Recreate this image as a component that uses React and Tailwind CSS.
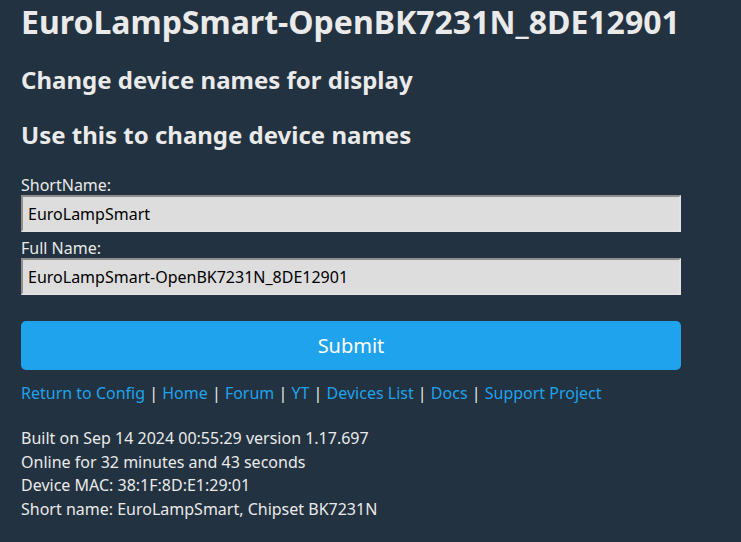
import React, { useState } from 'react';

const links = ['Return to Config', 'Home', 'Forum', 'YT', 'Devices List', 'Docs', 'Support Project'];

export default function App() {
  const [shortName, setShortName] = useState('EuroLampSmart');
  const [fullName, setFullName] = useState('EuroLampSmart-OpenBK7231N_8DE12901');

  return (
    <div className="min-h-screen bg-[#223240] text-[#eaeaea] font-['Noto_Sans',sans-serif] px-[21px]">
      <div className="w-[660px] [font-stretch:condensed]">
        <h1 className="text-[32px] font-bold leading-[40px] pt-[2px]">EuroLampSmart-OpenBK7231N_8DE12901</h1>
        <h2 className="text-[24px] font-bold leading-[30px] mt-[23px]">Change device names for display</h2>
        <h2 className="text-[24px] font-bold leading-[30px] mt-[25px]">Use this to change device names</h2>

        <form className="mt-[25px]" onSubmit={e => e.preventDefault()}>
          <label className="block text-[16px] leading-[20px]">ShortName:</label>
          <input
            className="block w-full h-[37px] bg-[#dddddd] text-black text-[16px] px-[5px] border-2 border-t-[#8f8f8f] border-l-[#8f8f8f] border-r-[#e2e2e2] border-b-[#e2e2e2] outline-none"
            value={shortName}
            onChange={e => setShortName(e.target.value)}
          />
          <label className="block text-[16px] leading-[20px] mt-[6px]">Full Name:</label>
          <input
            className="block w-full h-[37px] bg-[#dddddd] text-black text-[16px] px-[5px] border-2 border-t-[#8f8f8f] border-l-[#8f8f8f] border-r-[#e2e2e2] border-b-[#e2e2e2] outline-none"
            value={fullName}
            onChange={e => setFullName(e.target.value)}
          />
          <button type="submit" className="block w-full h-[49px] mt-[26px] bg-[#1fa3ec] rounded-[5px] text-white text-[20px]">
            Submit
          </button>
        </form>

        <div className="mt-[12px] text-[16px] leading-[22px]">
          {links.map((l, i) => (
            <span key={l}>
              <a href="#" className="text-[#1fa3ec]">{l}</a>
              {i < links.length - 1 && <span className="text-[#eaeaea]"> | </span>}
            </span>
          ))}
        </div>
      </div>

      <div className="mt-[23px] text-[16px] leading-[23.5px]">
        <div>Built on Sep 14 2024 00:55:29 version 1.17.697</div>
        <div>Online for 32 minutes and 43 seconds</div>
        <div>Device MAC: 38:1F:8D:E1:29:01</div>
        <div>Short name: EuroLampSmart, Chipset BK7231N</div>
      </div>
    </div>
  );
}
